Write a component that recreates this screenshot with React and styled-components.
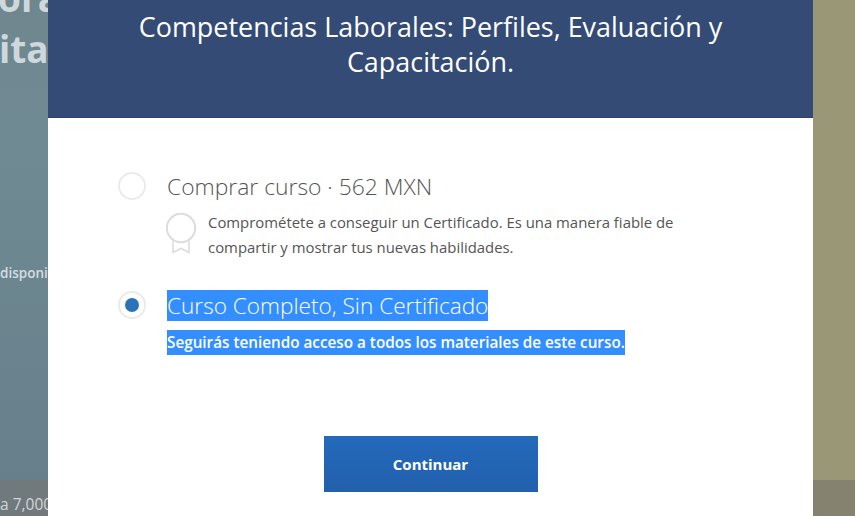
import React from "react";
import styled, { createGlobalStyle } from "styled-components";

const Global = createGlobalStyle`
  html, body { margin: 0; padding: 0; height: 100%; overflow: hidden; }
  body { font-family: "Open Sans", "Liberation Sans", sans-serif; background: #fff; }
`;

const Page = styled.div`
  position: relative;
  width: 855px;
  height: 516px;
  overflow: hidden;
  display: grid;
  grid-template-rows: 480px 36px;
`;

const Hero = styled.div`
  display: flex;
  justify-content: space-between;
  background: #9a9776;
`;

const HeroLeft = styled.div`
  width: 48px;
  background: linear-gradient(180deg, #6f868d 0%, #708a94 30%, #667f8a 100%);
  overflow: hidden;
  white-space: nowrap;
  display: flex;
  flex-direction: column;
`;

const HeroTitle = styled.div`
  font-size: 37px;
  line-height: 51px;
  font-weight: 700;
  color: #ced8dc;
  margin-left: ${(p) => p.$shift}px;
  &:first-child { margin-top: -28px; }
`;

const HeroNote = styled.div`
  margin-top: 191px;
  font-size: 13.5px;
  line-height: 16px;
  font-weight: 600;
  color: #d6dde0;
`;

const HeroRight = styled.div`
  width: 42px;
  background: #9a9776;
`;

const Strip = styled.div`
  display: flex;
  justify-content: space-between;
  background: linear-gradient(90deg, #70797d 0%, #787a76 50%, #85826f 100%);
`;

const StripText = styled.div`
  font-size: 15.5px;
  line-height: 20px;
  margin-top: 14px;
  width: 48px;
  overflow: hidden;
  white-space: nowrap;
  color: #d3d6d6;
`;

const Modal = styled.div`
  position: absolute;
  left: 48px;
  top: 0;
  width: 765px;
  height: 516px;
  background: #fff;
  display: flex;
  flex-direction: column;
`;

const Header = styled.header`
  height: 118px;
  box-sizing: border-box;
  background: #344b75;
  color: #fff;
  padding: 9px 30px 0;
  text-align: center;
  font-size: 26.95px;
  line-height: 35px;
  border-bottom: 1px solid #2f4468;
`;

const Body = styled.div`
  display: flex;
  flex-direction: column;
  padding: 53px 70px 0;
`;

const Option = styled.div`
  display: flex;
  gap: 21px;
  margin-bottom: ${(p) => p.$gap}px;
`;

const Radio = styled.span`
  flex: none;
  width: 28px;
  height: 28px;
  box-sizing: border-box;
  border-radius: 50%;
  border: 2px solid #ebebeb;
  background: #fff;
  display: flex;
  align-items: center;
  justify-content: center;
  margin-top: 1px;
`;

const Dot = styled.span`
  width: 14px;
  height: 14px;
  border-radius: 50%;
  background: #2a73b9;
`;

const OptionBody = styled.div`
  display: flex;
  flex-direction: column;
  align-items: flex-start;
`;

const OptionTitle = styled.div`
  font-size: 22.85px;
  line-height: 32px;
  font-weight: 300;
  color: #555;
`;

const Detail = styled.div`
  display: flex;
  gap: 10px;
  margin-top: 7px;
`;

const DetailText = styled.div`
  width: 510px;
  font-size: 14.9px;
  line-height: 25px;
  color: #555;
`;

const Selected = styled.span`
  background: #338fff;
  color: #fff;
  display: inline-block;
`;

const SelectedTitle = styled(Selected)`
  font-size: 22.6px;
  line-height: 31px;
  font-weight: 300;
`;

const SelectedText = styled(Selected)`
  margin-top: 9px;
  font-size: 15.28px;
  line-height: 25px;
  font-weight: 600;
`;

const Footer = styled.div`
  display: flex;
  justify-content: center;
  margin-top: 1px;
`;

const Button = styled.button`
  width: 214px;
  height: 56px;
  border: 0;
  border-radius: 0;
  background: linear-gradient(180deg, #2469bb 0%, #2260ad 100%);
  color: #fff;
  font-family: inherit;
  font-size: 15px;
  font-weight: 700;
`;

const Ribbon = () => (
  <svg width="32" height="44" viewBox="0 0 32 44" fill="none" style={{ flex: "none", marginLeft: "-1px", marginTop: "2px" }}>
    <circle cx="15" cy="16" r="14.2" stroke="#dcdcdc" strokeWidth="2" />
    <path d="M7 29v11.5l8-4 8 4V29" stroke="#dcdcdc" strokeWidth="1.6" />
  </svg>
);

export default function App() {
  return (
    <Page>
      <Global />
      <Hero>
        <HeroLeft>
          <HeroTitle $shift={-2}>ora</HeroTitle>
          <HeroTitle $shift={-1}>ita</HeroTitle>
          <HeroNote>disponible</HeroNote>
        </HeroLeft>
        <HeroRight />
      </Hero>
      <Strip>
        <StripText>a 7,000</StripText>
      </Strip>
      <Modal>
        <Header>Competencias Laborales: Perfiles, Evaluación y Capacitación.</Header>
        <Body>
          <Option $gap={30}>
            <Radio />
            <OptionBody>
              <OptionTitle>Comprar curso · 562 MXN</OptionTitle>
              <Detail>
                <Ribbon />
                <DetailText>
                  Comprométete a conseguir un Certificado. Es una manera fiable de compartir y mostrar tus nuevas habilidades.
                </DetailText>
              </Detail>
            </OptionBody>
          </Option>
          <Option $gap={80}>
            <Radio>
              <Dot />
            </Radio>
            <OptionBody>
              <SelectedTitle>Curso Completo, Sin Certificado</SelectedTitle>
              <SelectedText>Seguirás teniendo acceso a todos los materiales de este curso.</SelectedText>
            </OptionBody>
          </Option>
          <Footer>
            <Button>Continuar</Button>
          </Footer>
        </Body>
      </Modal>
    </Page>
  );
}
